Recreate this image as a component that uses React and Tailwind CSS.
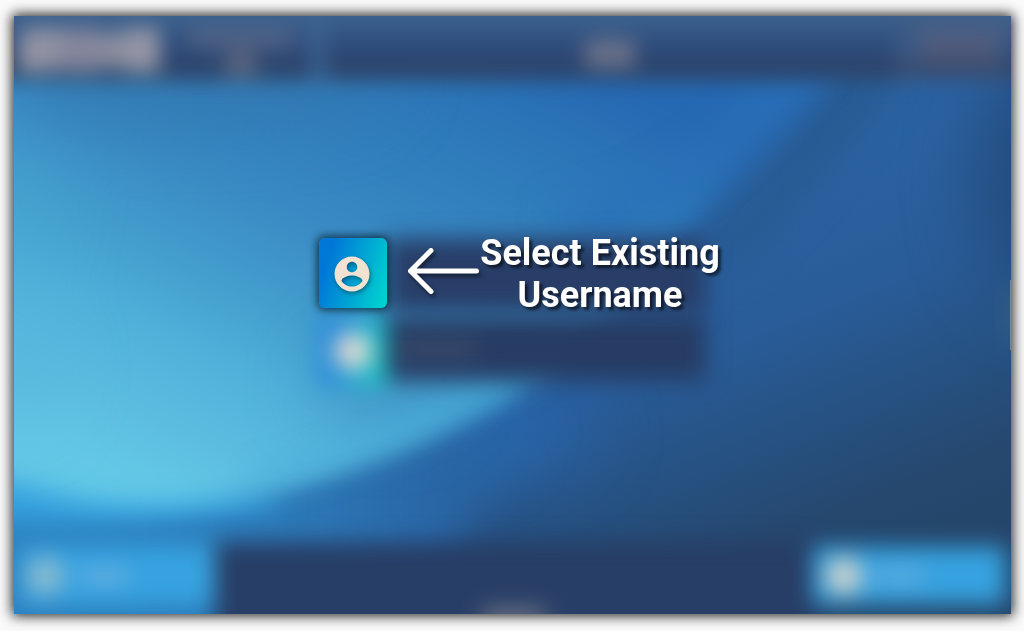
function Wallpaper() {
  return (
    <svg className="absolute inset-0 h-full w-full" viewBox="14 16 997 598" preserveAspectRatio="none" colorInterpolationFilters="sRGB">
      <defs>
        <linearGradient id="deep" gradientUnits="userSpaceOnUse" x1="600" y1="250" x2="740" y2="610">
          <stop offset="0" stopColor="#2a62a2" />
          <stop offset="0.35" stopColor="#295c98" />
          <stop offset="0.65" stopColor="#26507f" />
          <stop offset="0.85" stopColor="#26486f" />
          <stop offset="1" stopColor="#25466b" />
        </linearGradient>
        <linearGradient id="shore" gradientUnits="userSpaceOnUse" x1="150" y1="0" x2="560" y2="0">
          <stop offset="0" stopColor="#2e84c2" />
          <stop offset="0.4" stopColor="#2c76b5" />
          <stop offset="0.7" stopColor="#2966a5" />
          <stop offset="1" stopColor="#2966a5" stopOpacity="0" />
        </linearGradient>
        <linearGradient id="sweep" gradientUnits="userSpaceOnUse" x1="560" y1="42" x2="326" y2="562">
          <stop offset="0.04" stopColor="#2669b3" />
          <stop offset="0.15" stopColor="#2b74b7" />
          <stop offset="0.37" stopColor="#3484c0" />
          <stop offset="0.47" stopColor="#3a8bc4" />
          <stop offset="0.63" stopColor="#439ecd" />
          <stop offset="0.73" stopColor="#4eaed8" />
          <stop offset="0.89" stopColor="#5cbce0" />
          <stop offset="1" stopColor="#63c8e6" />
        </linearGradient>
        <filter id="b8" x="-50%" y="-50%" width="200%" height="200%"><feGaussianBlur stdDeviation="12" /></filter>
        <filter id="b18" x="-50%" y="-50%" width="200%" height="200%"><feGaussianBlur stdDeviation="18" /></filter>
        <filter id="b35" x="-100%" y="-150%" width="300%" height="400%"><feGaussianBlur stdDeviation="35" /></filter>
      </defs>
      <rect x="14" y="16" width="997" height="598" fill="url(#deep)" />
      <g filter="url(#b35)">
        <ellipse cx="1060" cy="180" rx="80" ry="130" fill="#244a7a" />
        <ellipse cx="480" cy="430" rx="110" ry="36" fill="#2968b0" />
      </g>
      <path d="M-60 420 H560 L540 460 L470 520 L420 640 H-60Z" fill="url(#shore)" filter="url(#b18)" />
      <path d="M850 75 Q790 150 725 225 L680 260 L740 265 Q830 170 900 75Z" fill="#275a90" filter="url(#b18)" />
      <path d="M-60 514 Q100 532 290 503 Q200 460 -60 460Z" fill="#36a2df" filter="url(#b8)" />
      <path d="M-60 -60 H925 Q840 70 725 180 Q630 310 525 388 Q400 460 290 487 Q150 518 50 492 L-60 466Z" fill="url(#sweep)" filter="url(#b8)" />
      <g filter="url(#b35)">
        <ellipse cx="380" cy="385" rx="62" ry="34" fill="#3f8cc2" opacity="0.8" />
        <ellipse cx="10" cy="210" rx="40" ry="60" fill="#46a5cf" opacity="0.5" />
        <ellipse cx="200" cy="80" rx="190" ry="40" fill="#3377ae" opacity="0.8" />
        <ellipse cx="10" cy="370" rx="45" ry="50" fill="#56b2da" opacity="0.7" />
      </g>
      <path d="M830 60 Q770 140 695 190 L600 240 L540 210 Q700 180 780 60Z" fill="#2a71b9" opacity="0.8" filter="url(#b18)" />
      <path d="M250 476 Q400 438 510 386" fill="none" stroke="#48afdb" strokeWidth="18" opacity="0.6" filter="url(#b8)" />
      <ellipse cx="1014" cy="315" rx="10" ry="34" fill="#4b6d88" opacity="0.4" filter="url(#b8)" />
    </svg>
  );
}

function Header() {
  return (
    <header className="-mx-8 -mt-8 flex h-[96px] shrink-0 items-end bg-linear-to-b from-[#3d6490] from-30% via-[#2c4878] via-70% to-[#2e4261] px-8 blur-[10px]">
      <div className="flex h-[64px] w-[298px] items-start">
        <div className="ml-1 mt-3 flex h-11 w-[142px]">
          <div className="h-11 w-11 -skew-x-6 rounded-lg bg-[#9193a3]" />
          <div className="h-11 w-9 bg-[#84869c]" />
          <div className="mt-1 h-9 w-7 bg-[#8a8c9e]" />
          <div className="h-11 w-9 rounded bg-[#9496a5]" />
        </div>
        <div className="ml-7 mt-3 flex w-[105px] flex-col items-center gap-1">
          <div className="h-5 w-full bg-[#506385]" />
          <div className="h-6 w-8 bg-[#5c647d]" />
        </div>
      </div>
      <div className="h-[64px] w-3 bg-[#3e6798]" />
      <div className="flex h-[64px] flex-1 items-center justify-center">
        <div className="mt-3 h-7 w-[50px] rounded bg-[#6a7189]" />
      </div>
      <div className="flex h-[64px] w-[116px] items-center bg-[#3a5984]">
        <div className="mt-1 flex w-full flex-col items-end">
          <div className="h-4 w-[96px] bg-[#4b6084]" />
          <div className="mr-4 h-5 w-[72px] bg-[#50597a]" />
          <div className="h-4 w-full bg-[#3b4b6c]" />
        </div>
      </div>
    </header>
  );
}

function AccountIcon() {
  return (
    <svg viewBox="0 0 24 24" className="mr-0.5 mt-px size-[42px] fill-[#f2e2d2] drop-shadow-[1px_2px_2px_rgba(0,0,0,0.4)]">
      <path d="M12 2C6.48 2 2 6.48 2 12s4.48 10 10 10 10-4.48 10-10S17.52 2 12 2zm0 3c1.66 0 3 1.34 3 3s-1.34 3-3 3-3-1.34-3-3 1.34-3 3-3zm0 14.2c-2.5 0-4.71-1.28-6-3.22.03-1.99 4-3.08 6-3.08 1.99 0 5.97 1.09 6 3.08-1.29 1.94-3.5 3.22-6 3.22z" />
    </svg>
  );
}

function Callout() {
  return (
    <div className="absolute -top-[6px] left-[86px] flex w-[320px] items-start">
      <svg viewBox="0 0 76 52" className="mt-[13px] h-[52px] w-[76px] shrink-0 fill-none stroke-white stroke-[5] drop-shadow-[2px_3px_2px_rgba(0,0,0,0.5)]" strokeLinecap="round" strokeLinejoin="round">
        <path d="M71.500 26H5.500M26 5.500 5.500 26 26 46.500" />
      </svg>
      <p className="-ml-[5px] w-[248px] shrink-0 text-center font-[Roboto,sans-serif] text-[36px] font-bold leading-[42px] text-white [text-shadow:3px_3px_3px_rgba(0,0,0,0.6)]">
        Select Existing Username
      </p>
    </div>
  );
}

function UserList() {
  return (
    <main className="flex flex-1 flex-col items-center gap-[5px] pt-[158px]">
      <div className="relative z-10 flex w-[387px]">
        <div className="relative z-10 flex h-[70px] w-[68px] items-center justify-center rounded-md bg-linear-[108deg,#0078d7_18%,#00cfd0_92%] shadow-[0_0_8px_2px_rgba(0,20,35,0.75)]">
          <AccountIcon />
        </div>
        <div className="h-[75px] flex-1 bg-[#283e68] blur-[11px]" />
        <Callout />
      </div>
      <div className="-mt-[2px] flex w-[387px] blur-[11px]">
        <div className="flex h-[70px] w-[68px] items-center justify-center bg-linear-[100deg,#2b8bdc_25%,#1cc8c4_90%]">
          <div className="size-[38px] rounded-full bg-[#dcd9d2]" />
        </div>
        <div className="flex h-[65px] flex-1 items-center bg-[#263c64]">
          <div className="ml-3 h-5 w-[78px] bg-[#394868]" />
        </div>
      </div>
    </main>
  );
}

function Footer() {
  return (
    <footer className="relative -mx-3 -mb-8 flex h-[104px] items-start px-3 blur-[11px]">
      <div className="ml-1.5 mt-[5px] flex h-[57px] w-[195px] items-center bg-[#36a2df] pl-1.5">
        <div className="size-[38px] rounded-full bg-[#8abad0]" />
        <div className="ml-4 h-5 w-12 bg-[#5eace0]" />
      </div>
      <div className="flex h-full flex-1 items-end justify-center bg-[#273e66]">
        <div className="mb-[18px] h-5 w-16 bg-[#6b7283]" />
      </div>
      <div className="mr-1.5 mt-[5px] flex h-[57px] w-[192px] items-center bg-[#36a2df] pl-3">
        <div className="size-[38px] rounded-full bg-[#c9d0cc]" />
        <div className="ml-3 h-5 w-12 bg-[#5aaae0]" />
      </div>
    </footer>
  );
}

export default function App() {
  return (
    <div className="h-[631px] w-[1024px] overflow-hidden bg-[#fbfbfb] pl-[14px] pt-4">
      <div className="h-[598px] w-[997px] shadow-[0_0_12px_2px_rgba(0,0,0,0.85)]">
        <div className="relative flex h-full flex-col overflow-hidden">
          <Wallpaper />
          <Header />
          <UserList />
          <Footer />
          <div className="absolute right-0 top-[264px] h-[70px] w-px bg-[#7b8995]" />
        </div>
      </div>
    </div>
  );
}
